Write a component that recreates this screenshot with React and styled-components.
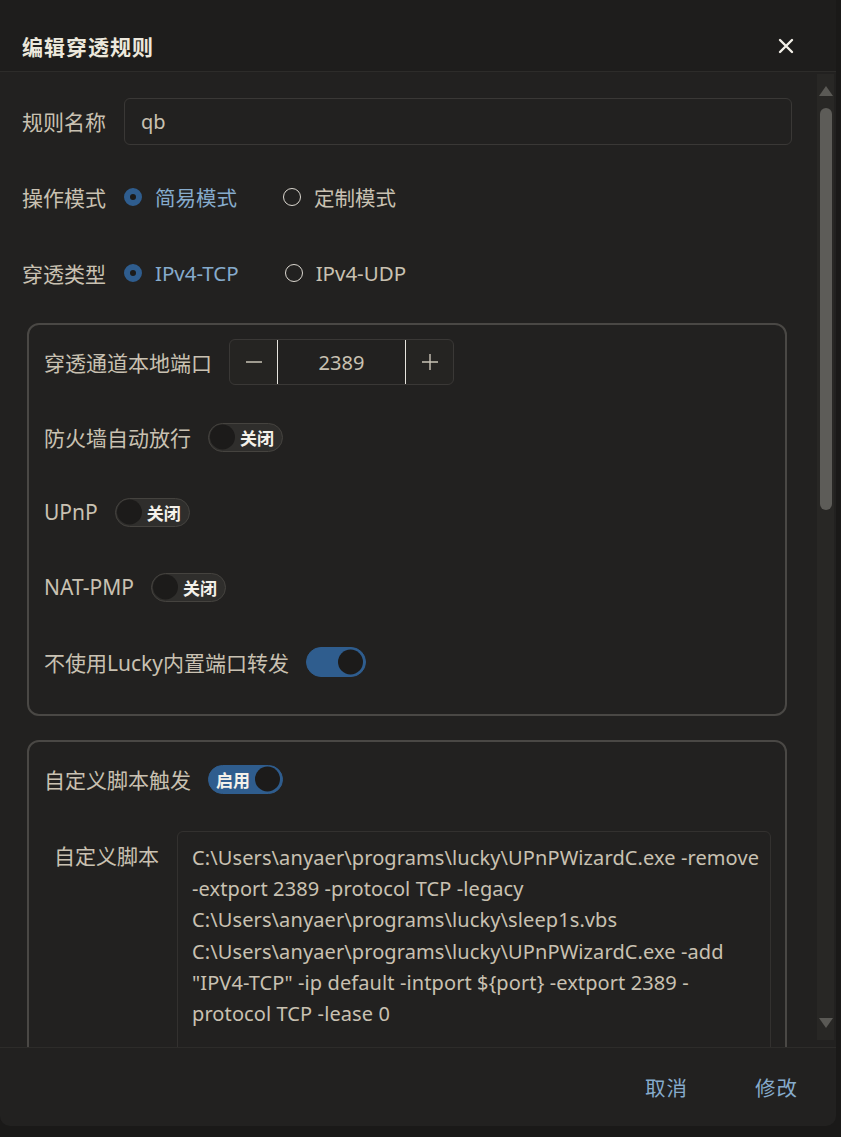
import React from 'react';
import styled, { createGlobalStyle } from 'styled-components';

const colors = {
  page: '#1a1918',
  dialog: '#222120',
  header: '#1e1d1c',
  line: '#2d2c2a',
  border: '#3a3836',
  cardBorder: '#4a4845',
  text: '#c9c1b2',
  title: '#ece8dc',
  blue: '#2f5d8e',
  blueText: '#86abcc',
  knob: '#1c1b1a',
};

const GlobalStyle = createGlobalStyle`
  html, body {
    margin: 0;
    padding: 0;
    background: ${colors.page};
  }
  body {
    font-family: "Noto Sans", "Noto Sans CJK SC", sans-serif;
    color: ${colors.text};
  }
`;

//Main component
export default function App() {
  const script = [
    'C:\\Users\\anyaer\\programs\\lucky\\UPnPWizardC.exe -remove',
    '-extport 2389 -protocol TCP -legacy',
    'C:\\Users\\anyaer\\programs\\lucky\\sleep1s.vbs',
    'C:\\Users\\anyaer\\programs\\lucky\\UPnPWizardC.exe -add',
    '"IPV4-TCP" -ip default -intport ${port} -extport 2389 -',
    'protocol TCP -lease 0',
  ];

  return (
    <>
      <GlobalStyle />
      <Dialog>
        <Header>
          <Title>编辑穿透规则</Title>
          <CloseButton aria-label="close">
            <svg width="16" height="16" viewBox="0 0 16 16">
              <path d="M2 2 L14 14 M14 2 L2 14" stroke="#f2efe8" strokeWidth="2.4" strokeLinecap="round" />
            </svg>
          </CloseButton>
        </Header>

        <Body>
          <Content>
            <FormRow>
              <Label>规则名称</Label>
              <TextInput defaultValue="qb" />
            </FormRow>

            <FormRow>
              <Label>操作模式</Label>
              <RadioGroup>
                <RadioOption $checked><RadioDot $checked />简易模式</RadioOption>
                <RadioOption><RadioDot />定制模式</RadioOption>
              </RadioGroup>
            </FormRow>

            <FormRow>
              <Label>穿透类型</Label>
              <RadioGroup>
                <RadioOption $checked><RadioDot $checked />IPv4-TCP</RadioOption>
                <RadioOption><RadioDot />IPv4-UDP</RadioOption>
              </RadioGroup>
            </FormRow>

            <Card>
              <CardRow>
                <InlineLabel>穿透通道本地端口</InlineLabel>
                <Stepper>
                  <StepButton>
                    <svg width="18" height="18" viewBox="0 0 18 18">
                      <path d="M1 9 H17" stroke="#c9c3b6" strokeWidth="1.4" />
                    </svg>
                  </StepButton>
                  <StepValue>2389</StepValue>
                  <StepButton>
                    <svg width="18" height="18" viewBox="0 0 18 18">
                      <path d="M1 9 H17 M9 1 V17" stroke="#c9c3b6" strokeWidth="1.4" />
                    </svg>
                  </StepButton>
                </Stepper>
              </CardRow>
              <CardRow>
                <InlineLabel>防火墙自动放行</InlineLabel>
                <Switch>关闭</Switch>
              </CardRow>
              <CardRow>
                <InlineLabel>UPnP</InlineLabel>
                <Switch>关闭</Switch>
              </CardRow>
              <CardRow>
                <InlineLabel>NAT-PMP</InlineLabel>
                <Switch>关闭</Switch>
              </CardRow>
              <CardRow>
                <InlineLabel>不使用Lucky内置端口转发</InlineLabel>
                <Switch $on $small />
              </CardRow>
            </Card>

            <Card>
              <CardRow>
                <InlineLabel>自定义脚本触发</InlineLabel>
                <Switch $on>启用</Switch>
              </CardRow>
              <ScriptRow>
                <ScriptLabel>自定义脚本</ScriptLabel>
                <ScriptBox>
                  {script.map((line, i) => (
                    <ScriptLine key={i}>{line}</ScriptLine>
                  ))}
                  <ScriptLine>&nbsp;</ScriptLine>
                  <ScriptLine>&nbsp;</ScriptLine>
                </ScriptBox>
              </ScriptRow>
            </Card>
          </Content>

          <ScrollTrack>
            <ScrollArrow />
            <ScrollThumb />
            <ScrollArrow $down />
          </ScrollTrack>
        </Body>

        <Footer>
          <TextButton>取消</TextButton>
          <TextButton>修改</TextButton>
        </Footer>
      </Dialog>
    </>
  );
}

const Dialog = styled.div`
  width: 836px;
  height: 1126px;
  background: ${colors.dialog};
  border-radius: 0 0 10px 10px;
  display: flex;
  flex-direction: column;
  overflow: hidden;
`;

const Header = styled.div`
  height: 72px;
  flex: none;
  box-sizing: border-box;
  padding: 20px 38px 0 22px;
  background: ${colors.header};
  border-bottom: 1px solid ${colors.line};
  display: flex;
  align-items: center;
  justify-content: space-between;
`;

const Title = styled.div`
  font-size: 21px;
  font-weight: bold;
  color: ${colors.title};
  letter-spacing: 1px;
`;

const CloseButton = styled.div`
  width: 24px;
  height: 24px;
  display: flex;
  align-items: center;
  justify-content: center;
`;

const Body = styled.div`
  flex: 1;
  min-height: 0;
  display: flex;
`;

const Content = styled.div`
  flex: 1;
  min-width: 0;
  overflow: hidden;
  padding: 23px 25px 0 22px;
`;

const FormRow = styled.div`
  height: 52px;
  margin-bottom: 24px;
  display: flex;
  align-items: center;
`;

const Label = styled.div`
  width: 102px;
  flex: none;
  font-size: 21px;
  color: ${colors.text};
`;

const TextInput = styled.input`
  flex: 1;
  height: 47px;
  box-sizing: border-box;
  background: transparent;
  border: 1px solid ${colors.border};
  border-radius: 6px;
  padding: 0 16px;
  font-family: "Noto Sans", "Noto Sans CJK SC", sans-serif;
  font-size: 20px;
  color: ${colors.text};
  outline: none;
`;

const RadioGroup = styled.div`
  display: flex;
  gap: 46px;
`;

const RadioOption = styled.label`
  display: flex;
  align-items: center;
  gap: 13px;
  font-size: 20.5px;
  color: ${p => (p.$checked ? colors.blueText : colors.text)};
`;

const RadioDot = styled.span`
  width: 18px;
  height: 18px;
  box-sizing: border-box;
  border-radius: 50%;
  border: ${p => (p.$checked ? `6px solid ${colors.blue}` : '1.5px solid #dcd8d0')};
  background: ${p => (p.$checked ? colors.knob : 'transparent')};
`;

const Card = styled.div`
  margin: 0 5px 24px 5px;
  border: 2px solid ${colors.cardBorder};
  border-radius: 12px;
  padding: 14px 14px 0 15px;
`;

const CardRow = styled.div`
  height: 46px;
  margin-bottom: 29px;
  display: flex;
  align-items: center;
  gap: 17px;
`;

const InlineLabel = styled.div`
  font-size: 21px;
  color: ${colors.text};
`;

const Stepper = styled.div`
  height: 46px;
  box-sizing: border-box;
  border: 1px solid ${colors.border};
  border-radius: 6px;
  background: #252422;
  display: flex;
  overflow: hidden;
`;

const StepButton = styled.div`
  width: 47px;
  display: flex;
  align-items: center;
  justify-content: center;
  &:first-child {
    border-right: 1px solid #e6e4de;
  }
  &:last-child {
    border-left: 1px solid #e6e4de;
  }
`;

const StepValue = styled.div`
  width: 127px;
  display: flex;
  align-items: center;
  justify-content: center;
  font-size: 20px;
  color: ${colors.text};
  background: ${colors.dialog};
`;

const Switch = styled.div`
  position: relative;
  width: ${p => (p.$small ? '60px' : '75px')};
  height: ${p => (p.$small ? '30px' : '29px')};
  box-sizing: border-box;
  border-radius: 15px;
  background: ${p => (p.$on ? colors.blue : '#2f2e2c')};
  border: 1px solid ${p => (p.$on ? colors.blue : '#45433f')};
  display: flex;
  align-items: center;
  justify-content: ${p => (p.$on ? 'flex-start' : 'flex-end')};
  padding: ${p => (p.$on ? '0 0 0 7px' : '0 8px 0 0')};
  font-size: 17px;
  font-weight: bold;
  color: #f4f1ea;

  &::after {
    content: '';
    position: absolute;
    top: 50%;
    transform: translateY(-50%);
    ${p => (p.$on ? 'right: 2px;' : 'left: 1px;')}
    width: 25px;
    height: 25px;
    border-radius: 50%;
    background: ${colors.knob};
  }
`;

const ScriptRow = styled.div`
  display: flex;
  align-items: flex-start;
  padding-left: 10px;
`;

const ScriptLabel = styled.div`
  width: 105px;
  flex: none;
  padding: 10px 18px 0 0;
  text-align: right;
  white-space: nowrap;
  font-size: 21px;
  line-height: 31px;
  color: ${colors.text};
`;

const ScriptBox = styled.div`
  flex: 1;
  min-width: 0;
  overflow: hidden;
  border: 1px solid #33312f;
  border-radius: 6px;
  padding: 10px 12px 20px 14px;
`;

const ScriptLine = styled.div`
  font-size: 20px;
  line-height: 31.2px;
  letter-spacing: 0.1px;
  white-space: pre;
  color: ${colors.text};
`;

const ScrollTrack = styled.div`
  width: 17px;
  flex: none;
  margin: 2px 2px 7px 0;
  background: #282725;
  display: flex;
  flex-direction: column;
  align-items: center;
  padding: 12px 0;
  gap: 12px;
`;

const ScrollArrow = styled.div`
  width: 0;
  height: 0;
  border-left: 7px solid transparent;
  border-right: 7px solid transparent;
  ${p => (p.$down ? 'border-top: 10px solid #5a5955;' : 'border-bottom: 10px solid #5a5955;')}
  ${p => (p.$down ? 'margin-top: auto;' : '')}
`;

const ScrollThumb = styled.div`
  width: 12px;
  height: 402px;
  border-radius: 6px;
  background: #5d5c58;
`;

const Footer = styled.div`
  height: 79px;
  flex: none;
  box-sizing: border-box;
  border-top: 1px solid ${colors.line};
  display: flex;
  align-items: center;
  justify-content: flex-end;
  gap: 67px;
  padding: 0 38px 0 0;
`;

const TextButton = styled.div`
  font-size: 20.5px;
  letter-spacing: 1px;
  color: ${colors.blueText};
`;
